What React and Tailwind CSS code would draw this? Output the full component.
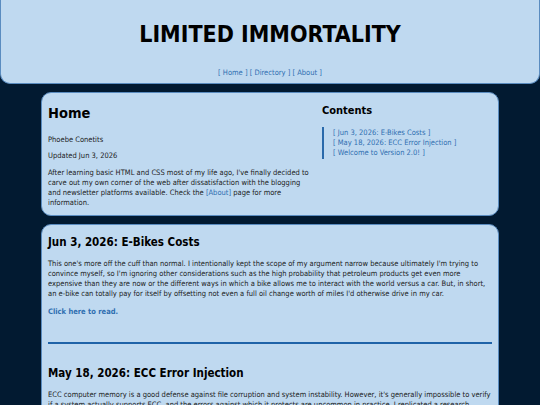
import React from "react";

const posts = [
    {
        title: "Jun 3, 2026: E-Bikes Costs",
        body: "This one's more off the cuff than normal. I intentionally kept the scope of my argument narrow because ultimately I'm trying to convince myself, so I'm ignoring other considerations such as the high probability that petroleum products get even more expensive than they are now or the different ways in which a bike allows me to interact with the world versus a car. But, in short, an e-bike can totally pay for itself by offsetting not even a full oil change worth of miles I'd otherwise drive in my car.",
    },
    {
        title: "May 18, 2026: ECC Error Injection",
        body: "ECC computer memory is a good defense against file corruption and system instability. However, it's generally impossible to verify if a system actually supports ECC, and the errors against which it protects are uncommon in practice. I replicated a research technique to inject errors and see what happens.",
    },
];

const contents = ["Jun 3, 2026: E-Bikes Costs", "May 18, 2026: ECC Error Injection", "Welcome to Version 2.0!"];

const App = () => {
    return (
        <div className="h-[405px] overflow-hidden bg-[#021a31] font-['DejaVu_Sans_Condensed','DejaVu_Sans',sans-serif] text-[#1c1c1c]">
            <header className="h-[84px] bg-[#bfd9f0] border border-t-0 border-[#5a8cc0] rounded-b-[10px] flex flex-col items-center">
                <h1 className="mt-[21px] text-[23px] leading-[26px] font-bold text-black">LIMITED IMMORTALITY</h1>
                <nav className="mt-[21px] text-[7.5px] leading-[10px] text-[#2f6fb0]">
                    [ Home ] [ Directory ] [ About ]
                </nav>
            </header>

            <main className="w-[458px] mx-auto mt-2 flex flex-col gap-2">
                <section className="h-[124px] bg-[#bfd9f0] border border-[#5a8cc0] rounded-[10px] flex px-[6px]">
                    <div className="w-[272px] shrink-0">
                        <h2 className="mt-[11px] text-[14.5px] leading-[18px] font-bold text-black">Home</h2>
                        <p className="mt-[13px] text-[7.5px] leading-[10px]">Phoebe Conetits</p>
                        <p className="mt-[6px] text-[7.5px] leading-[10px]">Updated Jun 3, 2026</p>
                        <p className="mt-[7px] w-[266px] text-[7.5px] leading-[10px]">
                            After learning basic HTML and CSS most of my life ago, I've finally decided to carve out my own corner of the web after dissatisfaction with the blogging and newsletter platforms available. Check the{" "}
                            <span className="text-[#2f6fb0]">[About]</span> page for more information.
                        </p>
                    </div>
                    <div className="ml-[2px]">
                        <h3 className="mt-[11px] text-[11px] leading-[13px] font-bold text-black">Contents</h3>
                        <ul className="mt-[10px] border-l-2 border-[#2a6aab] pl-[9px] py-[1px] text-[7.5px] leading-[10px] text-[#2f6fb0]">
                            {contents.map((c) => (
                                <li key={c}>[ {c} ]</li>
                            ))}
                        </ul>
                    </div>
                </section>

                <section className="bg-[#bfd9f0] border border-[#5a8cc0] rounded-[10px] px-[6px] pb-4">
                    {posts.map((post, i) => (
                        <div key={post.title}>
                            {i > 0 && <hr className="mt-[25px] mb-[22px] border-0 h-[2px] bg-[#1f63a8]" />}
                            <h3 className={`${i === 0 ? "mt-[10px]" : ""} text-[11.5px] leading-[14px] font-bold text-black`}>{post.title}</h3>
                            <p className="mt-[10px] text-[7.5px] leading-[10px]">{post.body}</p>
                            {i === 0 && <p className="mt-[8px] text-[7.5px] leading-[10px] font-bold text-[#2f6fb0]">Click here to read.</p>}
                        </div>
                    ))}
                </section>
            </main>
        </div>
    );
};

export default App;
